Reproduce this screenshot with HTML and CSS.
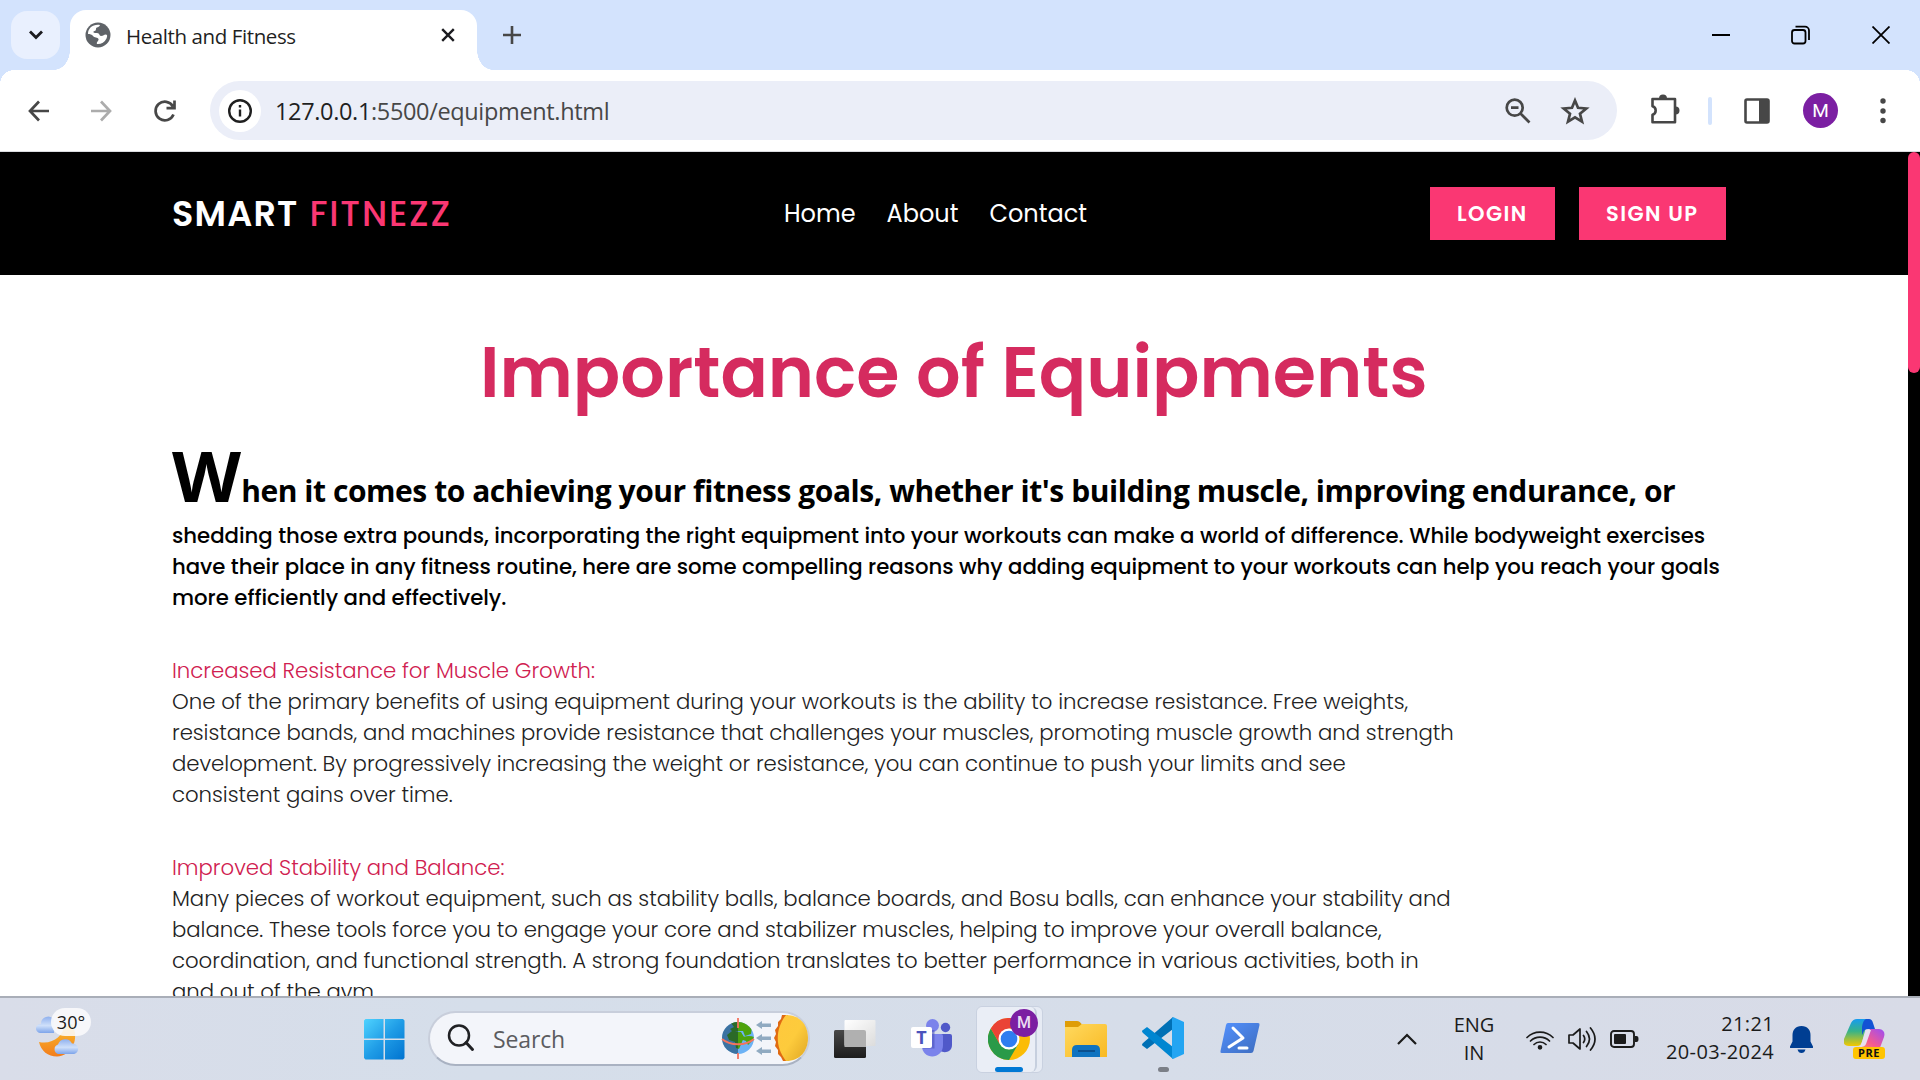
FILE: index.html
```html
<!DOCTYPE html>
<html lang="en">
<head>
<meta charset="utf-8">
<title>Health and Fitness</title>
<link rel="stylesheet" href="styles.css">
</head>
<body>
<div class="screen">
  <div class="tabstrip">
    <div class="tab-search"><svg width="16" height="12" viewBox="0 0 16 12"><path d="M2 2.500l6 6 6-6" fill="none" stroke="#1b1b1f" stroke-width="2.800"/></svg></div>
    <div class="tab">
      <svg class="globe" width="26" height="26" viewBox="0 0 26 26"><circle cx="13" cy="13" r="12.500" fill="#5f6368"/><path d="M15 3c-1 3-4 1.500-4 4 0 1.500-1 2-2.500 2.500C8 11 10 11 12 11c3 0 2 3 4 3 2.500 0 3-1.500 4.500-1.500 2 0 2 1.500 1 4-2 4-6 6-9.500 5.500-1-2 2-3 1.500-5-.5-2-4.500-1-5.500-3C7 12.500 5 12 3 12 3 6 8 2 15 3z" fill="#fff"/></svg>
      <span class="tab-title">Health and Fitness</span>
      <svg class="tab-close" width="14" height="14" viewBox="0 0 14 14"><path d="M1.200 1.200l11.600 11.600M12.800 1.200L1.200 12.800" stroke="#1b1b1f" stroke-width="2.400"/></svg>
    </div>
    <svg class="new-tab" width="18" height="18" viewBox="0 0 18 18"><path d="M9 0v18M0 9h18" stroke="#474747" stroke-width="2.600"/></svg>
    <div class="window-buttons">
      <svg width="18" height="18" viewBox="0 0 18 18"><path d="M0 9h18" stroke="#000" stroke-width="2"/></svg>
      <svg width="20" height="20" viewBox="0 0 20 20" fill="none" stroke="#000" stroke-width="1.800"><rect x="1" y="5" width="13.500" height="13.500" rx="2.500"/><path d="M4.500 1.600H14a4 4 0 0 1 4 4V15"/></svg>
      <svg width="18" height="18" viewBox="0 0 18 18"><path d="M.5.5l17 17M17.500.5L.5 17.500" stroke="#000" stroke-width="1.800"/></svg>
    </div>
  </div>

  <div class="toolbar">
    <svg class="ic back" width="22" height="22" viewBox="0 0 22 22" fill="none" stroke="#474747" stroke-width="2.700"><path d="M21 11H2.500M11 1.500L2 11l9 9.500"/></svg>
    <svg class="ic fwd" width="22" height="22" viewBox="0 0 22 22" fill="none" stroke="#acacac" stroke-width="2.700"><path d="M1 11h18.500M11 1.500l9 9.500-9 9.500"/></svg>
    <svg class="ic reload" width="24" height="24" viewBox="0 0 24 24" fill="none" stroke="#474747" stroke-width="2.700"><path d="M20.500 15.500A9.300 9.300 0 1 1 20 7.500M21.500 1.500v7.700h-8"/></svg>
    <div class="omnibox">
      <div class="info"><svg width="26" height="26" viewBox="0 0 26 26"><circle cx="13" cy="13" r="10.800" fill="none" stroke="#1f1f1f" stroke-width="2.400"/><path d="M13 11.500v7M13 7v2.600" stroke="#1f1f1f" stroke-width="2.400"/></svg></div>
      <span class="url"><b>127.0.0.1</b>:5500/equipment.html</span>
      <svg class="mag" width="26" height="26" viewBox="0 0 26 26" fill="none" stroke="#474747" stroke-width="2.700"><circle cx="9.700" cy="9.700" r="8"/><path d="M15.500 15.500l9 9M6 9.700h7.500"/></svg>
      <svg class="star" width="30" height="28" viewBox="0 0 30 28"><path d="M15 3.500l3 7.300 8.300.7-6.300 5.300 2 7.900-7-4.300-7 4.300 2-7.900-6.300-5.300 8.300-.7z" fill="none" stroke="#474747" stroke-width="2.700"/></svg>
    </div>
    <svg class="puzzle" width="30" height="30" viewBox="0 0 30 30"><path d="M2.500 5h22.500v23.300H2.500v-7.500a4.500 4.500 0 0 0 0-8.600z" fill="none" stroke="#474747" stroke-width="2.600" stroke-linejoin="round"/><path d="M9 4.500a4 4 0 0 1 8 0zM25.500 12.500a4 4 0 0 1 0 8z" fill="#474747"/></svg>
    <span class="divider"></span>
    <svg class="panel" width="26" height="26" viewBox="0 0 26 26"><rect x="1.500" y="1.500" width="23" height="23" rx="1.500" fill="none" stroke="#474747" stroke-width="2.600"/><path d="M15 1h10v24H15z" fill="#474747"/></svg>
    <span class="avatar">M</span>
    <svg class="dots" width="6" height="26" viewBox="0 0 6 26" fill="#474747"><circle cx="3" cy="3" r="2.700"/><circle cx="3" cy="13" r="2.700"/><circle cx="3" cy="22.500" r="2.700"/></svg>
  </div>

  <div class="viewport">
    <div class="page">
      <header class="site-header">
        <div class="logo"><span>SMART</span><span class="fitnezz">FITNEZZ</span></div>
        <nav class="nav"><a>Home</a><a>About</a><a>Contact</a></nav>
        <div class="actions"><a class="btn login">LOGIN</a><a class="btn signup">SIGN UP</a></div>
      </header>
      <main class="content">
        <h1 class="title">Importance of Equipments</h1>
        <p class="lead"><span class="cap">W</span><span class="opening">hen it comes to achieving your fitness goals, whether it's building muscle, improving endurance, or</span></p>
        <p class="intro">
          <span class="line">shedding those extra pounds, incorporating the right equipment into your workouts can make a world of difference. While bodyweight exercises</span>
          <span class="line tight">have their place in any fitness routine, here are some compelling reasons why adding equipment to your workouts can help you reach your goals</span>
          <span class="line">more efficiently and effectively.</span>
        </p>
        <section class="benefit">
          <h2 class="line">Increased Resistance for Muscle Growth:</h2>
          <span class="line">One of the primary benefits of using equipment during your workouts is the ability to increase resistance. Free weights,</span>
          <span class="line tight">resistance bands, and machines provide resistance that challenges your muscles, promoting muscle growth and strength</span>
          <span class="line">development. By progressively increasing the weight or resistance, you can continue to push your limits and see</span>
          <span class="line">consistent gains over time.</span>
        </section>
        <section class="benefit">
          <h2 class="line">Improved Stability and Balance:</h2>
          <span class="line">Many pieces of workout equipment, such as stability balls, balance boards, and Bosu balls, can enhance your stability and</span>
          <span class="line tight">balance. These tools force you to engage your core and stabilizer muscles, helping to improve your overall balance,</span>
          <span class="line">coordination, and functional strength. A strong foundation translates to better performance in various activities, both in</span>
          <span class="line">and out of the gym.</span>
        </section>
      </main>
    </div>
    <div class="scrollbar"><div class="thumb"></div></div>
  </div>

  <div class="taskbar">
    <div class="weather">
      <svg width="46" height="44" viewBox="0 0 46 44"><defs><linearGradient id="cl" x2="0" y2="1"><stop stop-color="#8fb0ee"/><stop offset=".55" stop-color="#cfe0fa"/><stop offset="1" stop-color="#7da4ea"/></linearGradient><linearGradient id="mo" x2="0" y2="1"><stop stop-color="#fbc02d"/><stop offset="1" stop-color="#f27c1b"/></linearGradient></defs><path d="M6 18a4.500 4.500 0 0 1 1-9 7 7 0 0 1 13-4v13z" fill="url(#cl)"/><path d="M5 27c14 3 24-7 25-15l8-3c8 15 0 32-15 32.500C14 41.500 7 36 5 27z" fill="url(#mo)"/><path d="M24 39a5 5 0 0 1 0-9.500 7.500 7.500 0 0 1 14-1c8 0 8 10.500 1 10.500z" fill="url(#cl)"/></svg>
      <span class="temp">30°</span>
    </div>
    <svg class="start" width="41" height="41" viewBox="0 0 41 41"><defs><linearGradient id="w1" gradientUnits="userSpaceOnUse" x1="0" y1="0" x2="41" y2="41"><stop stop-color="#4fd3ff"/><stop offset=".5" stop-color="#1f9ce6"/><stop offset="1" stop-color="#0072cf"/></linearGradient></defs><path d="M1.500 0H19.500V19.500H0V1.500zM21 0H39L40.500 1.500V19.500H21zM0 21H19.500V40.500H1.500L0 39zM21 21H40.500V39L39 40.500H21z" fill="url(#w1)"/></svg>
    <div class="search">
      <svg class="lens" width="28" height="28" viewBox="0 0 28 28" fill="none" stroke="#202124" stroke-width="2.500" stroke-linecap="round"><circle cx="12" cy="11.500" r="10"/><path d="M19 18.500l6.500 7" stroke-width="3"/></svg>
      <span class="search-text">Search</span>
      <svg class="equinox" width="88" height="46" viewBox="0 0 88 46"><defs><clipPath id="gc"><circle cx="18" cy="23" r="16"/></clipPath><linearGradient id="sn" x2="1" y2="1"><stop stop-color="#ffc83d"/><stop offset=".5" stop-color="#fdcb3c"/><stop offset="1" stop-color="#dfa624"/></linearGradient></defs><circle cx="18" cy="23" r="16" fill="#6cb2f5"/><g clip-path="url(#gc)"><path d="M11 8l5-4 9 1 7 7-1 7-6 2-2-5-6 0-4 1-3-3 4-2zM7 20l5-4 9 1 3 5-2 5-3 7-3-1-1-6-6-2zM20 24c3-3 10-4 14-2l-3 5-3 3-2-4z" fill="#4ea30c"/><path d="M2 5h16v36H2z" fill="#062c45" opacity=".48"/></g><path d="M18 3v10M18 38v6M2 24c8 7 24 7 32 0" fill="none" stroke="#f4735e" stroke-width="1.800"/><path d="M36 10l6-4v2.500h9v3.500h-9v2zM36 23l6-4v2.500h9v3.500h-9v2zM36 36l6-4v2.500h9v3.500h-9v2z" fill="#90aac1"/><path d="M68 0h-6l-1 4-3 3v4l-3 4 1 4-2 4 2 4-1 4 3 4v4l3 3 2 4h6z" fill="#e06a12"/><path d="M66 0C80 0 88 10 88 23S80 46 66 46C55 32 55 14 66 0z" fill="url(#sn)"/></svg>
    </div>
    <svg class="taskview" width="42" height="40" viewBox="0 0 42 40"><defs><linearGradient id="dk" x2="0" y2="1"><stop stop-color="#484848"/><stop offset="1" stop-color="#1c1c1c"/></linearGradient><linearGradient id="lt" x2="1" y2="1"><stop stop-color="#fff"/><stop offset="1" stop-color="#dcdcdc"/></linearGradient></defs><rect y="11" width="32" height="28" rx="1.500" fill="url(#dk)"/><rect x="10.500" y="1" width="31" height="26" rx="1" fill="url(#lt)"/><path d="M10.500 11H30q2 0 2 2v15H10.500z" fill="#b0b0b0"/></svg>
    <svg class="teams" width="42" height="40" viewBox="0 0 42 40"><circle cx="34.500" cy="9.500" r="4.700" fill="#5059c9"/><path d="M29 16h10q2 0 2 2v9c0 10-14 8-13 3z" fill="#5059c9"/><circle cx="21.500" cy="7.500" r="6.500" fill="#7b83eb"/><path d="M14 16h16q2 0 2 2v9c0 15-21 15-21 1z" fill="#7b83eb"/><path d="M14 12h9.500v18.500H12z" fill="#4b53bc" opacity=".6"/><rect y="9" width="21" height="21" rx="2" fill="#fff"/><text x="10.500" y="26" text-anchor="middle" class="svg-t">T</text></svg>
    <div class="chrome-tile"><div class="chrome-front">
      <svg width="42" height="42" viewBox="0 0 48 48"><circle cx="24" cy="24" r="24" fill="#fbbc05"/><path d="M3.200 12L13.600 30 24 36 34.400 30 24 48A24 24 0 0 1 3.200 12z" fill="#2a9a48"/><path d="M3.200 12L13.600 30l3-12L24 12h20.800A24 24 0 0 0 3.200 12z" fill="#ea4335"/><circle cx="24" cy="24" r="12" fill="#fff"/><circle cx="24" cy="24" r="9.500" fill="#2f7df0"/></svg>
      <span class="badge">M</span><span class="running"></span></div></div>
    <svg class="folder" width="42" height="38" viewBox="0 0 42 38"><defs><linearGradient id="fo" x2="1" y2="1"><stop stop-color="#ffd95f"/><stop offset="1" stop-color="#f9b922"/></linearGradient></defs><path d="M0 1h12q3 0 5 4L14 9H0z" fill="#df9d06"/><path d="M0 7h13l4-3h23q2 0 2 2v31H0z" fill="url(#fo)"/><path d="M7 37v-7q0-5 5-5h18q5 0 5 5v7z" fill="#0f73c0"/><path d="M13 31h17" stroke="#0b508e" stroke-width="2"/></svg>
    <div class="vscode"><svg width="42" height="42" viewBox="0 0 42 42"><path d="M31 0v12L5 32l-4-3q-2-1 0-3z" fill="#0070b5"/><path d="M31 42V30L5 10 1 13q-2 1 0 3z" fill="#0086d1"/><path d="M31 0l11 5v32l-11 5q-1 0-1-2V2z" fill="#23a5f2"/></svg><span class="idle"></span></div>
    <svg class="pwsh" width="40" height="30" viewBox="0 0 40 30"><defs><linearGradient id="ps" x2="1" y2="1"><stop stop-color="#5391fe"/><stop offset="1" stop-color="#3e6dbf"/></linearGradient></defs><path d="M8 0h30q2 0 1.500 2l-6 26q-.5 2-2.500 2H1.500Q0 30 .5 28L6 2Q6.500 0 8 0z" fill="url(#ps)"/><path d="M13 5l10 10L9 24M19 25h8" fill="none" stroke="#fff" stroke-width="3" stroke-linecap="round" stroke-linejoin="round"/></svg>
    <div class="tray">
      <svg class="chev" width="20" height="12" viewBox="0 0 20 12"><path d="M1 11l9-9 9 9" fill="none" stroke="#1b1b1b" stroke-width="2.200"/></svg>
      <div class="lang"><span>ENG</span><span>IN</span></div>
      <svg class="wifi" width="28" height="22" viewBox="0 0 28 22" fill="none" stroke="#1b1b1b" stroke-width="1.700" stroke-linecap="round"><path d="M1 9.500a18.500 18.500 0 0 1 26 0M4.500 13a13.400 13.400 0 0 1 19 0M8 16.500a8.500 8.500 0 0 1 12 0"/><circle cx="14" cy="19.300" r="1.500" fill="#1b1b1b"/></svg>
      <svg class="sound" width="29" height="26" viewBox="0 0 29 26" fill="none" stroke="#1b1b1b" stroke-width="1.700" stroke-linecap="round" stroke-linejoin="round"><path d="M1 9h4l7-6v20l-7-6H1zM15.500 9.500q2.500 3.500 0 7M18.500 5.500q6 7.500 0 15M22.500 2q9 11 0 22"/></svg>
      <svg class="battery" width="29" height="18" viewBox="0 0 29 18"><rect x="1" y="1" width="23" height="16" rx="3" fill="none" stroke="#1b1b1b" stroke-width="1.900"/><rect x="4" y="4" width="12" height="10" rx="1" fill="#1b1b1b"/><path d="M25 6h1.500q2 0 2 3t-2 3H25z" fill="#1b1b1b"/></svg>
      <div class="clock"><span>21:21</span><span>20-03-2024</span></div>
      <svg class="bell" width="23" height="27" viewBox="0 0 23 27"><path d="M11.500 0c6 0 9 4 9 9v6.500l2.500 5q.5 1.500-1 1.500H1q-1.500 0-1-1.500l2.500-5V9c0-5 3-9 9-9zM7.500 23.500h8q-1 3.500-4 3.500t-4-3.500z" fill="#003e92"/></svg>
      <div class="copilot"><svg width="41" height="38" viewBox="0 0 41 38"><defs><linearGradient id="ca" x2="0" y2="1"><stop stop-color="#169bf0"/><stop offset=".45" stop-color="#36b389"/><stop offset="1" stop-color="#f5c800"/></linearGradient><linearGradient id="cb" x1="1" x2="0" y2="1"><stop stop-color="#9b4df5"/><stop offset=".6" stop-color="#f55a8f"/><stop offset="1" stop-color="#fb9a62"/></linearGradient></defs><path d="M10 29h22l-2 5H14z" fill="#fb8a6a"/><path d="M7 4q2-4 6-4h12l-3 8-4 15q-1 4-5 4H5c-5 0-6-3-5-7z" fill="url(#ca)"/><path d="M22 0h3q3 0 4 4l2 6h-7q-4 0-5 4l-1 2 0-8q1-7 4-8z" fill="#1252d4"/><path d="M26 10h9q7 1 5 8l-3 8q-1 4-5 4H14q4-1 5-5z" fill="url(#cb)"/><path d="M22 11h5l-5 14q-1 3-6 3l3-8z" fill="#e8e0f0"/></svg><span class="pre">PRE</span></div>
    </div>
  </div>
</div>
</body>
</html>
```
FILE: styles.css
```css
* { box-sizing: border-box; }
body { margin: 0; overflow: hidden; font-family: "Open Sans", sans-serif; }
svg { display: block; flex: none; }
.screen { width: 1920px; height: 1080px; display: flex; flex-direction: column; overflow: hidden; background: #fff; }

/* Tab strip */
.tabstrip { height: 70px; flex: none; display: flex; align-items: flex-start; background: #d3e3fd; padding-left: 11px; }
.tab-search { width: 49px; height: 48px; margin-top: 11px; border-radius: 16px; background: #e9f0fe; display: flex; align-items: center; justify-content: center; }
.tab { position: relative; width: 407px; height: 60px; margin: 10px 0 0 10px; background: #fff; border-radius: 16px 16px 0 0; display: flex; align-items: center; padding: 0 22px 10px 15px; }
.tab::before, .tab::after { content: ""; position: absolute; bottom: 0; width: 16px; height: 20px; }
.tab::before { left: -16px; background: radial-gradient(ellipse 16px 20px at 0 0, transparent 98%, #fff 100%); }
.tab::after { right: -16px; background: radial-gradient(ellipse 16px 20px at 100% 0, transparent 98%, #fff 100%); }
.tab-title { margin-left: 15px; font-size: 20.5px; line-height: 30px; letter-spacing: -.4px; color: #1f1f1f; padding-top: 2px; white-space: nowrap; }
.tab-close { margin-left: auto; }
.new-tab { margin: 26px 0 0 26px; }
.window-buttons { margin: 25px 30px 0 auto; display: flex; align-items: center; gap: 61px; }

/* Toolbar */
.toolbar { position: relative; height: 82px; flex: none; display: flex; align-items: center; background: #fff; border-bottom: 1px solid #dadce0; padding: 0 34px 0 28px; }
.toolbar::before, .toolbar::after { content: ""; position: absolute; top: 0; width: 14px; height: 14px; }
.toolbar::before { left: 0; background: radial-gradient(circle 14px at 100% 100%, #fff 98%, #d3e3fd 100%); }
.toolbar::after { right: 0; background: radial-gradient(circle 14px at 0 100%, #fff 98%, #d3e3fd 100%); }
.fwd { margin-left: 40px; }
.reload { margin-left: 41px; }
.omnibox { width: 1407px; height: 59px; margin-left: 33px; border-radius: 30px; background: #ebeef8; display: flex; align-items: center; padding: 0 27px 0 9px; flex: none; }
.info { width: 42px; height: 42px; border-radius: 50%; background: #fff; display: flex; align-items: center; justify-content: center; }
.url { margin-left: 14px; font-size: 23.5px; line-height: 34px; letter-spacing: -.35px; color: #474747; white-space: nowrap; }
.url b { font-weight: 400; color: #1f1f1f; }
.mag { margin-left: auto; }
.star { margin-left: 29px; }
.puzzle { margin: -3px 0 0 33px; }
.divider { width: 4px; height: 28px; border-radius: 2px; background: #d3e3fd; margin-left: 28px; }
.panel { margin-left: 32px; }
.avatar { width: 35px; height: 35px; border-radius: 50%; background: #7b1fa2; color: #fff; font: 19px/35px Roboto, sans-serif; text-align: center; margin-left: 33px; }
.dots { margin-left: auto; }

/* Page */
.viewport { height: 844px; flex: none; display: flex; overflow: hidden; }
.page { width: 1908px; font-family: Poppins, Inter, sans-serif; }
.site-header { height: 123px; background: #000; color: #fff; display: grid; grid-template-columns: 612px 646px 1fr; align-items: center; padding-left: 172px; }
.logo { display: flex; gap: 11px; font-size: 35px; font-weight: 600; line-height: 40px; letter-spacing: 1.2px; }
.fitnezz { color: #fa3773; font-weight: 500; letter-spacing: 1.8px; }
.nav { display: flex; gap: 31px; font-size: 24px; font-weight: 400; line-height: 30px; }
.actions { display: flex; gap: 24px; }
.btn { height: 53px; background: #fa3773; font-size: 21px; font-weight: 600; line-height: 53px; padding-left: 27px; letter-spacing: 1.4px; white-space: nowrap; }
.login { width: 125px; }
.signup { width: 147px; }
.content { padding: 58px 0 0 172px; }
.title { margin: 0 0 28px; padding-left: 308px; font-size: 70px; font-weight: 600; line-height: 80px; color: #d52b5f; white-space: nowrap; }
.lead { margin: 0 0 11px; height: 68px; line-height: 68px; font-family: "Open Sans", sans-serif; font-weight: 700; color: #000; white-space: nowrap; }
.cap { display: inline-block; font-size: 69px; line-height: 68px; letter-spacing: 2.5px; transform: scaleX(1.035); transform-origin: 0 50%; }
.opening { font-size: 30px; line-height: 0; letter-spacing: -.451px; }
.intro { margin: 0; font-size: 21.25px; font-weight: 500; letter-spacing: -.025px; color: #000; }
.line { display: block; height: 31px; line-height: 31px; white-space: nowrap; }
.line.tight { letter-spacing: -.043px; }
.benefit { margin-top: 42px; font-size: 21.25px; font-weight: 300; letter-spacing: -.025px; color: #222; }
h2.line { margin: 0; font-size: 21.25px; font-weight: 300; color: #d02050; }
.scrollbar { width: 12px; background: #000; }
.thumb { height: 221px; border-radius: 6px; background: #fa3773; }

/* Taskbar */
.taskbar { height: 84px; flex: none; border-top: 2px solid #a9aeb8; background: linear-gradient(90deg, #d9dde9, #d5deea 25%, #d6dde9 60%, #d8dbe7); display: flex; align-items: center; padding-left: 34px; }
.weather { position: relative; width: 60px; height: 60px; padding-top: 6px; }
.temp { position: absolute; left: 17px; top: -1px; width: 40px; height: 28px; border-radius: 14px; background: rgba(250,250,252,.88); font-size: 18px; line-height: 28px; text-align: center; color: #1b1b1b; }
.start { margin-left: 270px; }
.search { width: 382px; height: 55px; margin: -2px 0 0 23px; border: 2px solid #c8cedb; border-bottom-color: #a9b2c2; border-radius: 28px; background: #f3f5fa; display: flex; align-items: center; flex: none; padding: 0 0 0 17px; }
.search-text { margin-left: 18px; font-size: 23px; line-height: 32px; letter-spacing: -.14px; padding-top: 2px; color: #5b5c5f; }
.equinox { margin-left: auto; }
.taskview { margin-left: 24px; }
.teams { margin-left: 35px; margin-top: -2px; }
.svg-t { font: 700 18px "Open Sans", sans-serif; fill: #4b53bc; }
.chrome-tile { width: 67px; height: 67px; margin-left: 23px; border-radius: 6px; background: #e6ebf4; border: 1px solid #c9d1e0; flex: none; }
.chrome-front { position: relative; width: 60px; height: 65px; border-radius: 6px; border-right: 2px solid #c6cfde; background: #eaeef6; padding: 11px 0 0 11px; }
.badge { position: absolute; left: 33px; top: 2px; width: 28px; height: 28px; border-radius: 50%; background: #7b1fa2; color: #eadcf2; font: 500 16px/28px Roboto, sans-serif; text-align: center; }
.running { position: absolute; left: 18px; bottom: 0; width: 28px; height: 5px; border-radius: 3px; background: #0078d4; }
.folder { margin-left: 22px; }
.vscode { position: relative; margin-left: 35px; margin-top: -2px; }
.idle { position: absolute; left: 16px; top: 50px; width: 11px; height: 5px; border-radius: 3px; background: #7b7f87; }
.pwsh { margin: -2px 0 0 36px; }
.tray { display: flex; align-items: center; color: #1b1b1b; font-size: 20px; line-height: 28px; margin-left: 137px; }
.lang { width: 50px; margin-left: 32px; display: flex; flex-direction: column; align-items: center; }
.wifi { margin-left: 27px; }
.sound { margin-left: 14px; }
.battery { margin-left: 13px; }
.clock { width: 110px; margin-left: 25px; display: flex; flex-direction: column; align-items: flex-end; letter-spacing: .36px; margin-top: -2px; }
.bell { margin-left: 16px; }
.copilot { position: relative; margin-left: 31px; width: 41px; height: 40px; }
.pre { position: absolute; left: 9px; top: 28px; width: 32px; height: 12px; border-radius: 3px; background: #ffc400; font-size: 11px; font-weight: 700; line-height: 12px; text-align: center; letter-spacing: .5px; color: #111; }
```
